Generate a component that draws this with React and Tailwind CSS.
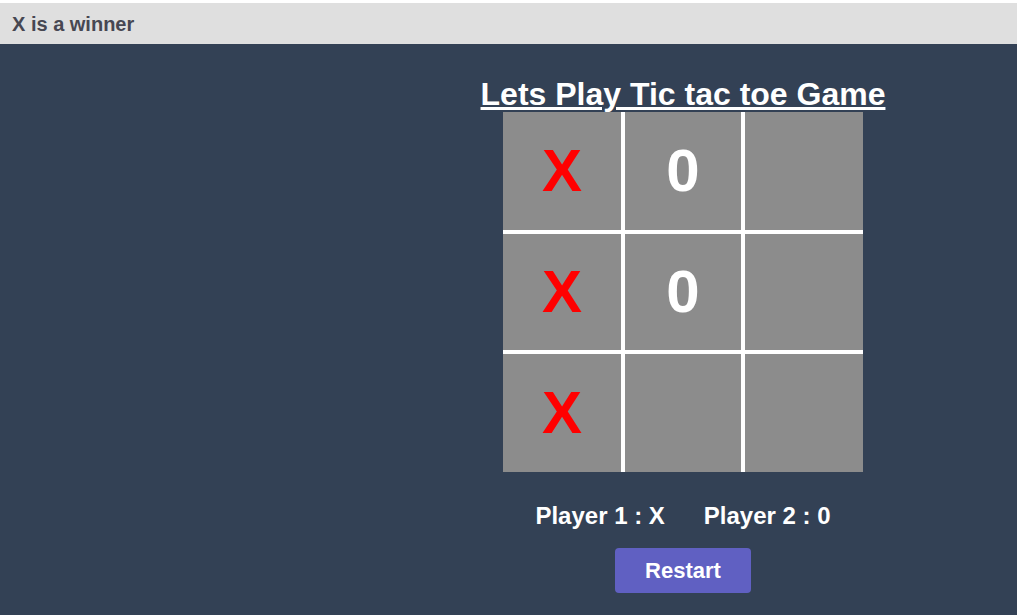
import { useState } from "react";

const initial = ["X", "0", "", "X", "0", "", "X", "", ""];

export default function App() {
  const [cells, setCells] = useState(initial);

  return (
    <div
      className="min-h-[615px] bg-white pt-[3px]"
      style={{ fontFamily: '"Liberation Sans", Arial, sans-serif' }}
    >
      <div className="h-[41px] bg-[#dfdfdf] px-3 flex items-center">
        <h4 className="text-[20px] font-bold text-[#474752]">X is a winner</h4>
      </div>

      <div className="bg-[#334155] min-h-[571px] grid grid-cols-[349px_1fr]">
        <div />
        <div className="flex flex-col items-center pt-[34px]">
          <h1 className="text-[32px] leading-[32px] font-bold text-white underline underline-offset-[2px] decoration-[3px]">
            Lets Play Tic tac toe Game
          </h1>

          <div className="mt-[2px] grid grid-cols-[118px_116px_118px] grid-rows-[118px_116px_118px] gap-1 bg-white">
            {cells.map((v, i) => (
              <button
                key={i}
                onClick={() => {
                  if (v) return;
                  const next = [...cells];
                  next[i] = "X";
                  setCells(next);
                }}
                className={`bg-[#8c8c8c] flex items-center justify-center text-[60px] leading-none font-bold ${
                  v === "X" ? "text-[#ff0000]" : "text-white"
                }`}
              >
                {v}
              </button>
            ))}
          </div>

          <div className="mt-[32px] flex gap-[39px] text-[24px] leading-[24px] font-bold text-white">
            <span>Player 1 : X</span>
            <span>Player 2 : 0</span>
          </div>

          <button
            onClick={() => setCells(Array(9).fill(""))}
            className="mt-5 w-[136px] h-[45px] rounded bg-[#6060c2] text-white text-[22px] font-bold"
          >
            Restart
          </button>
        </div>
      </div>
    </div>
  );
}
